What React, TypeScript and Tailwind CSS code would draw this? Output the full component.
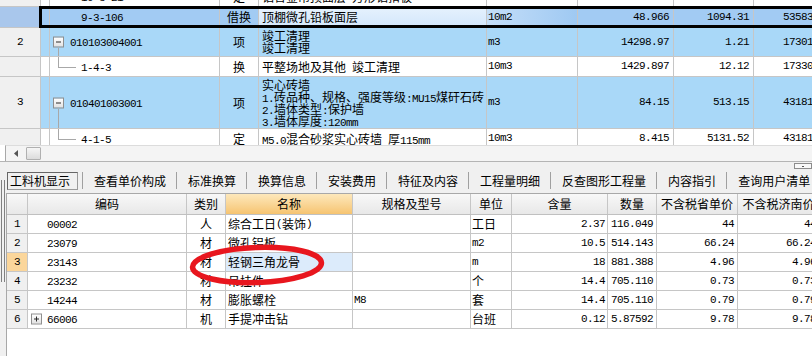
import React from "react";

const ASCII = /^[\x20-\x7e]+$/;

function T({ s }: { s: string }) {
  const parts = s.split(/([\x20-\x7e]+)/).filter((p) => p.length > 0);
  return (
    <>
      {parts.map((p, i) =>
        ASCII.test(p) ? (
          <span
            key={i}
            className="font-['Liberation_Mono',monospace] text-[11px] tracking-[-0.6px] whitespace-pre"
          >
            {p}
          </span>
        ) : (
          <span key={i}>{p}</span>
        )
      )}
    </>
  );
}

type TopRowProps = {
  hc: string;
  hdr?: string;
  hdrBg: string;
  bg: string;
  code: string;
  parent?: boolean;
  lineUp?: boolean;
  lineDown?: boolean;
  type: string;
  name: string[];
  unit: string;
  qty: string;
  price: string;
  total: string;
  nameBg?: string;
  unitBg?: string;
};

function MinusBox({ plus }: { plus?: boolean }) {
  return (
    <div className="absolute left-[3px] top-1/2 -translate-y-1/2 w-[11px] h-[11px] border border-[#8f8f8f] bg-gradient-to-b from-white to-[#e2e2e2] flex items-center justify-center">
      <div className="relative w-[5px] h-[5px] flex items-center justify-center">
        <div className="w-[5px] h-px bg-[#2b2b2b]" />
        {plus && <div className="absolute left-[2px] top-0 w-px h-[5px] bg-[#2b2b2b]" />}
      </div>
    </div>
  );
}

function TopRow(p: TopRowProps) {
  const line = "border-r border-[#c6c6c6] shrink-0";
  return (
    <div className={`flex border-b border-[#c6c6c6] ${p.hc}`}>
      <div className={`w-[41px] ${line} flex items-center justify-center ${p.hdrBg}`}>
        {p.hdr ? <T s={p.hdr} /> : null}
      </div>
      <div className={`w-[9px] ${line} ${p.bg}`} />
      <div className={`w-[170px] ${line} relative flex items-center ${p.bg}`}>
        {p.parent ? (
          <>
            <MinusBox />
            {p.lineDown && (
              <div className="absolute left-[8px] top-1/2 mt-[6px] bottom-0 w-px bg-[#a8a8a8]" />
            )}
            <span className="pl-[20px]">
              <T s={p.code} />
            </span>
          </>
        ) : (
          <>
            {p.lineUp && (
              <>
                <div className="absolute left-[8px] top-0 h-1/2 w-px bg-[#a8a8a8]" />
                <div className="absolute left-[8px] top-1/2 w-[18px] h-px bg-[#a8a8a8]" />
              </>
            )}
            <span className="pl-[31px]">
              <T s={p.code} />
            </span>
          </>
        )}
      </div>
      <div className={`w-[39px] ${line} flex items-center justify-center ${p.bg}`}>
        {p.type}
      </div>
      <div
        className={`w-[228px] ${line} flex flex-col justify-center pl-[3px] leading-[12px] whitespace-nowrap overflow-hidden ${p.nameBg ?? p.bg}`}
      >
        {p.name.map((n, i) => (
          <div key={i} className="h-[12px]">
            <T s={n} />
          </div>
        ))}
      </div>
      <div className={`w-[91px] ${line} flex items-center pl-[1px] ${p.unitBg ?? p.bg}`}>
        <T s={p.unit} />
      </div>
      <div className={`w-[96px] ${line} flex items-center justify-end pr-[4px] ${p.bg}`}>
        <T s={p.qty} />
      </div>
      <div className={`w-[80px] ${line} flex items-center justify-end pr-[4px] ${p.bg}`}>
        <T s={p.price} />
      </div>
      <div className={`w-[82px] ${line} flex items-center justify-end pr-[4px] ${p.bg}`}>
        <T s={p.total} />
      </div>
    </div>
  );
}

type BRowProps = {
  n: string;
  code: string;
  plus?: boolean;
  type: string;
  name: string;
  spec: string;
  unit: string;
  q1: string;
  q2: string;
  p1: string;
  p2: string;
  rnBg?: string;
  nameBg?: string;
};

function BRow(p: BRowProps) {
  const line = "border-r border-[#c6c6c6] shrink-0 h-full";
  return (
    <div className="flex h-[19px] border-b border-[#c6c6c6] bg-white">
      <div className={`w-[21px] ${line} flex items-center justify-center ${p.rnBg ?? "bg-[#f0f0f0]"}`}>
        <T s={p.n} />
      </div>
      <div className={`w-[159px] ${line} relative flex items-center`}>
        {p.plus && <MinusBox plus />}
        <span className="pl-[19px]">
          <T s={p.code} />
        </span>
      </div>
      <div className={`w-[39px] ${line} flex items-center justify-center`}>{p.type}</div>
      <div className={`w-[127px] ${line} flex items-center pl-[2px] whitespace-nowrap ${p.nameBg ?? ""}`}>
        <T s={p.name} />
      </div>
      <div className={`w-[118px] ${line} flex items-center pl-[1px]`}>
        <T s={p.spec} />
      </div>
      <div className={`w-[41px] ${line} flex items-center pl-[1px]`}>
        <T s={p.unit} />
      </div>
      <div className={`w-[96px] ${line} flex items-center justify-end pr-[2px]`}>
        <T s={p.q1} />
      </div>
      <div className={`w-[49px] ${line} flex items-center justify-end pr-[3px]`}>
        <T s={p.q2} />
      </div>
      <div className={`w-[81px] ${line} flex items-center justify-end pr-[3px]`}>
        <T s={p.p1} />
      </div>
      <div className={`w-[82px] ${line} flex items-center justify-end pr-[3px]`}>
        <T s={p.p2} />
      </div>
    </div>
  );
}

function HCell({ w, children, extra }: { w: string; children?: React.ReactNode; extra?: string }) {
  return (
    <div
      className={`${w} shrink-0 h-full border-r border-[#c6c6c6] flex items-center justify-center whitespace-nowrap ${extra ?? ""}`}
    >
      {children}
    </div>
  );
}

const tabs = ["查看单价构成", "标准换算", "换算信息", "安装费用", "特征及内容", "工程量明细", "反查图形工程量", "内容指引", "查询用户清单"];

export default function App() {
  const blue = "bg-[#a9d8f8]";
  const sel = "bg-[#a2cbf3]";
  return (
    <div className="w-[812px] h-[356px] overflow-hidden relative bg-[#f0f0f0] text-[12px] text-black font-['Noto_Sans_CJK_SC',sans-serif]">
      {/* top grid panel */}
      <div className="h-[162px] bg-white border-b border-[#b4b4b4] flex flex-col">
        <div className="h-[145px] overflow-hidden relative">
          <div className="-mt-[13px]">
            <TopRow
              hc="h-[20px]"
              hdrBg="bg-[#f0f0f0]"
              bg="bg-white"
              code="10-3-21"
              type="定"
              name={["铝合金吊顶面层 方形铝扣板"]}
              unit="10m2"
              qty="48.966"
              price="1030.54"
              total="50461.42"
            />
            <TopRow
              hc="h-[21px]"
              hdrBg="bg-[#a9c7ec]"
              bg={sel}
              code="9-3-106"
              type="借换"
              name={["顶棚微孔铅板面层"]}
              nameBg="bg-gradient-to-b from-[#e6f2fd] to-[#d3e7fb]"
              unitBg="bg-gradient-to-r from-[#c4def8] to-[#9fc9f2]"
              unit="10m2"
              qty="48.966"
              price="1094.31"
              total="53583.98"
            />
            <TopRow
              hc="h-[29px]"
              hdr="2"
              hdrBg="bg-[#f0f0f0]"
              bg={blue}
              code="010103004001"
              parent
              lineDown
              type="项"
              name={["竣工清理", "竣工清理"]}
              unit="m3"
              qty="14298.97"
              price="1.21"
              total="17301.75"
            />
            <TopRow
              hc="h-[20px]"
              hdrBg="bg-[#f0f0f0]"
              bg="bg-white"
              code="1-4-3"
              lineUp
              type="换"
              name={["平整场地及其他 竣工清理"]}
              unit="10m3"
              qty="1429.897"
              price="12.12"
              total="17330.35"
            />
            <TopRow
              hc="h-[52px]"
              hdr="3"
              hdrBg="bg-[#f0f0f0]"
              bg={blue}
              code="010401003001"
              parent
              lineDown
              type="项"
              name={["实心砖墙", "1.砖品种、规格、强度等级:MU15煤矸石砖", "2.墙体类型:保护墙", "3.墙体厚度:120mm"]}
              unit="m3"
              qty="84.15"
              price="513.15"
              total="43181.57"
            />
            <TopRow
              hc="h-[20px]"
              hdrBg="bg-[#f0f0f0]"
              bg="bg-white"
              code="4-1-5"
              lineUp
              type="定"
              name={["M5.0混合砂浆实心砖墙 厚115mm"]}
              unit="10m3"
              qty="8.415"
              price="5131.52"
              total="43181.74"
            />
          </div>
          <div className="absolute left-[39px] top-[6px] w-[800px] h-[22px] border-[3px] border-black pointer-events-none" />
        </div>
        {/* horizontal scrollbar */}
        <div className="h-[16px] ml-[5px] border-l border-t border-[#a8a8a8] border-t-[#dcdcdc] bg-[#f4f4f4] flex items-center">
          <svg width="4" height="7" viewBox="0 0 4 7" className="ml-[8px]">
            <polygon points="4,0 0,3.5 4,7" fill="#555" />
          </svg>
          <div className="ml-[8px] w-[15px] h-[13px] border border-[#b0b0b0] rounded-[1px] bg-gradient-to-b from-[#f6f6f6] to-[#dcdcdc]" />
        </div>
      </div>

      {/* small restore button at right */}
      <div className="absolute left-[794px] top-[163px] w-[18px] h-[6px] border border-[#8c8c8c] bg-[#f8f8f8] flex items-end justify-center">
        <div className="w-[2px] h-px bg-[#555] mb-[1px]" />
      </div>

      <div className="h-[8px]" />

      <div className="flex h-[186px]">
        <div className="w-[6px] shrink-0">
          <div className="mt-[10px] ml-[1px] w-[4px] h-[102px] border-x border-[#808080]" />
        </div>
        <div className="flex-1 min-w-0 flex flex-col overflow-hidden">
          {/* tabs */}
          <div className="h-[23px] shrink-0 flex items-start pl-[1px] pt-[2px] whitespace-nowrap">
            <div className="w-[71px] h-[18px] shrink-0 border border-[#9a9a9a] border-t-[#666] border-l-[#666] flex items-center pl-[2px]">
              工料机显示
            </div>
            <div className="ml-[4px] w-px h-[17px] bg-[#a0a0a0] shrink-0" />
            {tabs.map((t, i) => (
              <React.Fragment key={t}>
                <div className="h-[18px] flex items-center pl-[11px] pr-[10px] shrink-0">{t}</div>
                {i < tabs.length - 1 && <div className="w-px h-[17px] bg-[#a0a0a0] shrink-0" />}
              </React.Fragment>
            ))}
          </div>

          {/* bottom grid */}
          <div className="flex-1 bg-white border-l border-t border-[#a8a8a8]">
            <div className="flex h-[21px] border-b border-[#c0c0c0] bg-gradient-to-b from-[#f8f8f8] to-[#e8e8e8]">
              <HCell w="w-[21px]" />
              <HCell w="w-[159px]">编码</HCell>
              <HCell w="w-[39px]">类别</HCell>
              <HCell w="w-[127px]" extra="bg-gradient-to-b from-[#fde8bb] to-[#f6c470]">
                名称
              </HCell>
              <HCell w="w-[118px]">规格及型号</HCell>
              <HCell w="w-[41px]">单位</HCell>
              <HCell w="w-[96px]">含量</HCell>
              <HCell w="w-[49px]">数量</HCell>
              <HCell w="w-[81px]">不含税省单价</HCell>
              <HCell w="w-[82px]">不含税济南价</HCell>
            </div>
            <BRow n="1" code="00002" type="人" name="综合工日(装饰)" spec="" unit="工日" q1="2.37" q2="116.049" p1="44" p2="44" />
            <BRow n="2" code="23079" type="材" name="微孔铝板" spec="" unit="m2" q1="10.5" q2="514.143" p1="66.24" p2="66.24" />
            <BRow
              n="3"
              code="23143"
              type="材"
              name="轻钢三角龙骨"
              spec=""
              unit="m"
              q1="18"
              q2="881.388"
              p1="4.96"
              p2="4.96"
              rnBg="bg-[#fbd69b]"
              nameBg="bg-[#dcebfb]"
            />
            <BRow n="4" code="23232" type="材" name="吊挂件" spec="" unit="个" q1="14.4" q2="705.110" p1="0.73" p2="0.73" />
            <BRow n="5" code="14244" type="材" name="膨胀螺栓" spec="M8" unit="套" q1="14.4" q2="705.110" p1="0.79" p2="0.79" />
            <BRow n="6" code="66006" plus type="机" name="手提冲击钻" spec="" unit="台班" q1="0.12" q2="5.87592" p1="9.78" p2="9.78" />
          </div>
        </div>
      </div>

      {/* red hand-drawn ellipse */}
      <svg
        className="absolute left-[184px] top-[239px] pointer-events-none"
        width="146"
        height="52"
        viewBox="0 0 146 52"
      >
        <ellipse
          cx="73"
          cy="26"
          rx="64.5"
          ry="17.5"
          fill="none"
          stroke="#e8161e"
          strokeWidth="5.5"
          transform="rotate(-2 73 26)"
        />
      </svg>
    </div>
  );
}
